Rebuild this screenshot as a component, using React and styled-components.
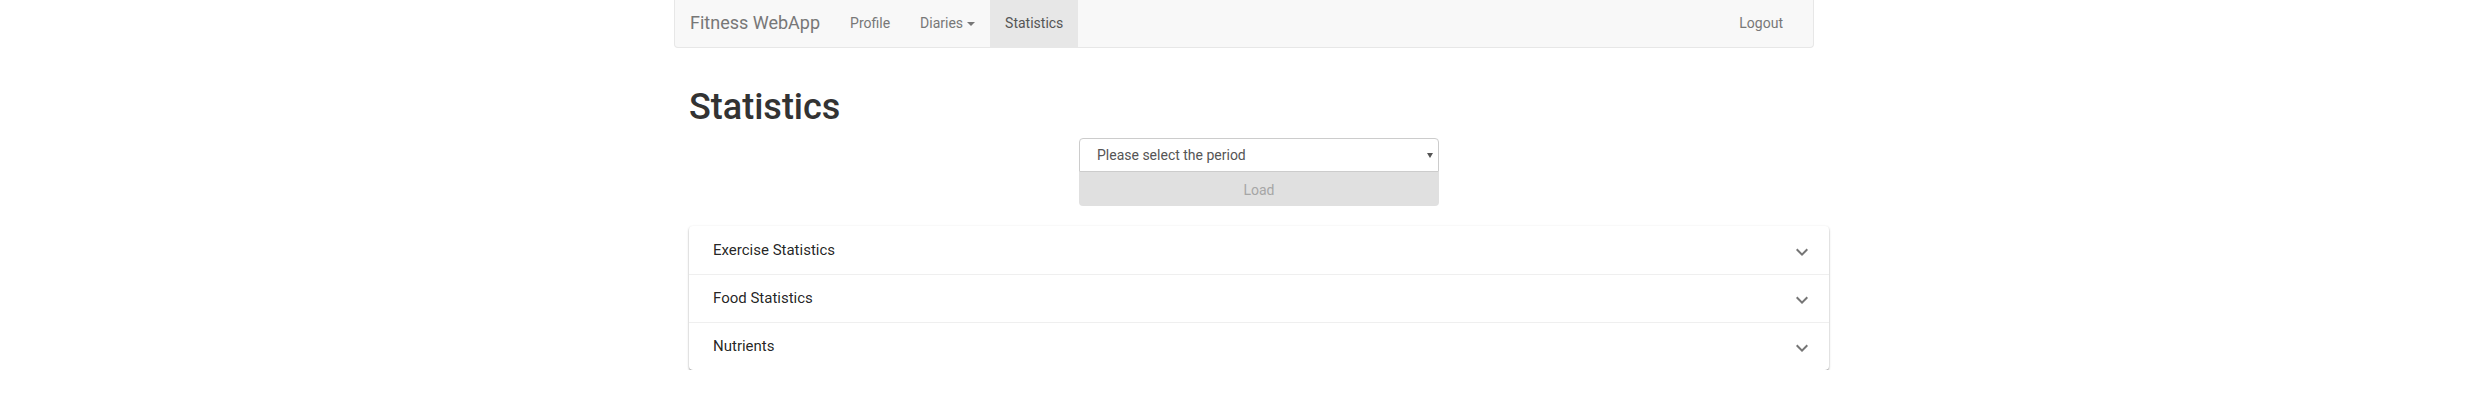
import React from "react";
import styled, { createGlobalStyle } from "styled-components";

const GlobalStyle = createGlobalStyle`
	html, body {
		margin: 0;
		padding: 0;
		background: #fff;
	}
	body {
		font-family: Roboto, "Liberation Sans", Arial, sans-serif;
		font-size: 14px;
		color: #333;
	}
`;

const navItems = [
	{ label: "Profile" },
	{ label: "Diaries", caret: true },
	{ label: "Statistics", active: true },
];

const panels = ["Exercise Statistics", "Food Statistics", "Nutrients"];

const ExpandIcon = () => (
	<svg width="24" height="24" viewBox="0 0 24 24" aria-hidden="true">
		<path fill="currentColor" d="M16.59 8.59L12 13.17 7.41 8.59 6 10l6 6 6-6z" />
	</svg>
);

const App = () => {
	return (
		<>
			<GlobalStyle />
			<Page>
				<Container>
					<Navbar>
						<Brand>Fitness WebApp</Brand>
						<NavList>
							{navItems.map((item) => (
								<NavLink key={item.label} $active={item.active}>
									{item.label}
									{item.caret && <Caret />}
								</NavLink>
							))}
						</NavList>
						<NavRight>
							<NavLink>Logout</NavLink>
						</NavRight>
					</Navbar>
					<Content>
						<Title>Statistics</Title>
						<PeriodForm>
							<Select>
								<span>Please select the period</span>
								<SelectArrow />
							</Select>
							<LoadButton disabled>Load</LoadButton>
						</PeriodForm>
						<Panels>
							{panels.map((name) => (
								<PanelRow key={name}>
									<PanelTitle>{name}</PanelTitle>
									<IconBox>
										<ExpandIcon />
									</IconBox>
								</PanelRow>
							))}
						</Panels>
					</Content>
				</Container>
			</Page>
		</>
	);
};

const Page = styled.div`
	display: flex;
	justify-content: center;
	padding-left: 35px;
`;

const Container = styled.div`
	width: 1170px;
`;

const Navbar = styled.nav`
	width: 1140px;
	height: 48px;
	box-sizing: border-box;
	display: flex;
	align-items: stretch;
	background: #f8f8f8;
	border: 1px solid #e7e7e7;
	border-top: none;
	border-radius: 0 0 4px 4px;
`;

const Brand = styled.div`
	display: flex;
	align-items: center;
	padding: 0 15px 2px;
	font-size: 18px;
	color: #777;
`;

const NavList = styled.div`
	display: flex;
`;

const NavRight = styled.div`
	display: flex;
	margin-left: auto;
	margin-right: 15px;
`;

const NavLink = styled.div`
	display: flex;
	align-items: center;
	padding: 0 15px 1px;
	font-size: 14px;
	color: ${(p) => (p.$active ? "#555" : "#777")};
	background: ${(p) => (p.$active ? "#e7e7e7" : "transparent")};
`;

const Caret = styled.span`
	display: inline-block;
	width: 0;
	height: 0;
	margin-left: 4px;
	margin-top: 2px;
	border-top: 4px solid #777;
	border-left: 4px solid transparent;
	border-right: 4px solid transparent;
`;

const Content = styled.div`
	padding: 0 15px;
`;

const Title = styled.h1`
	margin: 40px 0 10px;
	font-size: 36px;
	font-weight: 500;
	line-height: 1.1;
	color: #333;
`;

const PeriodForm = styled.div`
	width: 360px;
	margin: 0 auto;
	display: flex;
	flex-direction: column;
`;

const Select = styled.div`
	height: 34px;
	box-sizing: border-box;
	display: flex;
	align-items: center;
	justify-content: space-between;
	padding: 0 5px 0 17px;
	border: 1px solid #ccc;
	border-radius: 4px 4px 0 0;
	background: #fff;
	font-size: 14px;
	color: #555;
`;

const SelectArrow = styled.span`
	width: 0;
	height: 0;
	margin-top: 1px;
	border-top: 5px solid #555;
	border-left: 3px solid transparent;
	border-right: 3px solid transparent;
`;

const LoadButton = styled.button`
	height: 34px;
	border: none;
	border-radius: 0 0 4px 4px;
	background: #e0e0e0;
	color: #a6a6a6;
	font-family: Roboto, "Liberation Sans", Arial, sans-serif;
	font-size: 14px;
	padding: 2px 0 0;
`;

const Panels = styled.div`
	margin-top: 20px;
	background: #fff;
	border-radius: 4px;
	box-shadow: 0px 2px 2px -1px rgba(0, 0, 0, 0.4), 0px 1px 2px 0px rgba(0, 0, 0, 0.2),
		0px 1px 3px 0px rgba(0, 0, 0, 0.12);
`;

const PanelRow = styled.div`
	height: 48px;
	box-sizing: border-box;
	display: flex;
	align-items: center;
	justify-content: space-between;
	padding: 0 15px 0 24px;
	& + & {
		border-top: 1px solid #efefef;
	}
`;

const PanelTitle = styled.div`
	font-size: 15px;
	color: rgba(0, 0, 0, 0.87);
`;

const IconBox = styled.div`
	display: flex;
	margin-top: 4px;
	color: rgba(0, 0, 0, 0.54);
`;

export default App;
